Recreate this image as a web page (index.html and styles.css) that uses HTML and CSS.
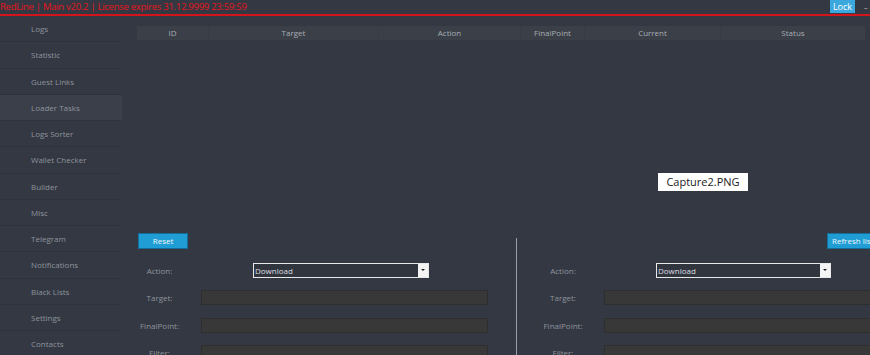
FILE: index.html
```html
<!DOCTYPE html>
<html>
<head>
<meta charset="utf-8">
<link rel="stylesheet" href="styles.css">
</head>
<body>
<div class="app">
  <div class="titlebar">
    <span class="title">RedLine | Main v20.2 | License expires 31.12.9999 23:59:59</span>
    <span class="lock">Lock</span>
    <span class="minimize">_</span>
  </div>
  <div class="main">
    <nav class="sidebar">
      <div class="nav-item">Logs</div>
      <div class="nav-item">Statistic</div>
      <div class="nav-item">Guest Links</div>
      <div class="nav-item active">Loader Tasks</div>
      <div class="nav-item">Logs Sorter</div>
      <div class="nav-item">Wallet Checker</div>
      <div class="nav-item">Builder</div>
      <div class="nav-item">Misc</div>
      <div class="nav-item">Telegram</div>
      <div class="nav-item">Notifications</div>
      <div class="nav-item">Black Lists</div>
      <div class="nav-item">Settings</div>
      <div class="nav-item">Contacts</div>
    </nav>
    <section class="content">
      <div class="table">
        <div class="thead">
          <div class="th c-id">ID</div>
          <div class="th c-target">Target</div>
          <div class="th c-action">Action</div>
          <div class="th c-final">FinalPoint</div>
          <div class="th c-current">Current</div>
          <div class="th c-status">Status</div>
        </div>
        <div class="tbody"></div>
        <div class="watermark">Capture2.PNG</div>
      </div>
      <div class="panels">
        <div class="panel left">
          <div class="btn-row"><span class="btn">Reset</span></div>
          <div class="form">
            <div class="row">
              <span class="label">Action:</span>
              <span class="select sel-left"><span class="sel-text">Download</span><span class="sel-arrow"></span></span>
            </div>
            <div class="row">
              <span class="label">Target:</span>
              <span class="input"></span>
            </div>
            <div class="row">
              <span class="label">FinalPoint:</span>
              <span class="input"></span>
            </div>
            <div class="row">
              <span class="label">Filter:</span>
              <span class="input"></span>
            </div>
          </div>
        </div>
        <div class="panel right">
          <div class="btn-row end"><span class="btn refresh">Refresh list</span></div>
          <div class="form">
            <div class="row">
              <span class="label">Action:</span>
              <span class="select sel-right"><span class="sel-text">Download</span><span class="sel-arrow"></span></span>
            </div>
            <div class="row">
              <span class="label">Target:</span>
              <span class="input"></span>
            </div>
            <div class="row">
              <span class="label">FinalPoint:</span>
              <span class="input"></span>
            </div>
            <div class="row">
              <span class="label">Filter:</span>
              <span class="input"></span>
            </div>
          </div>
        </div>
      </div>
    </section>
  </div>
</div>
</body>
</html>
```

FILE: styles.css
```css
* { box-sizing: border-box; }
html, body { margin: 0; padding: 0; }
body {
  width: 870px;
  height: 355px;
  overflow: hidden;
  background: #333842;
  font-family: "Open Sans", "Noto Sans", sans-serif;
  font-size: 8px;
  color: #9aa0a9;
}
.app { width: 870px; height: 355px; display: flex; flex-direction: column; overflow: hidden; }
.titlebar {
  height: 16px;
  flex: none;
  display: flex;
  align-items: flex-start;
  border-bottom: 2px solid #d3141b;
}
.title {
  color: #e3161d;
  font-size: 9.6px;
  line-height: 13px;
  letter-spacing: -0.32px;
  flex: 1;
  white-space: nowrap;
}
.lock {
  width: 25px;
  height: 13px;
  background: #3aa8dd;
  color: #fff;
  font-size: 9px;
  line-height: 13px;
  text-align: center;
  margin-right: 9px;
}
.minimize {
  color: #c8ccd2;
  font-size: 8px;
  line-height: 9px;
  width: 6px;
  overflow: hidden;
}
.main { flex: 1; display: flex; min-height: 0; }
.sidebar { width: 122px; flex: none; display: flex; flex-direction: column; }
.nav-item {
  height: 26.25px;
  flex: none;
  line-height: 26px;
  padding-left: 31px;
  border-bottom: 1px solid #2d323b;
  color: #8f949d;
  font-size: 8px;
  white-space: nowrap;
}
.nav-item.active { background: #3a3f49; }
.content { flex: 1; padding: 10px 0 0 15px; display: flex; flex-direction: column; min-width: 0; }
.table { width: 728px; height: 206px; display: flex; flex-direction: column; position: relative; flex: none; }
.thead { height: 14px; display: flex; background: #3a3f48; }
.th {
  text-align: center;
  line-height: 14px;
  color: #a9adb4;
  font-size: 8px;
  border-right: 1px solid #373c45;
}
.th:last-child { border-right: none; }
.c-id { width: 72px; }
.c-target { width: 170px; }
.c-action { width: 142px; }
.c-final { width: 64px; }
.c-current { width: 136px; }
.c-status { width: 144px; }
.tbody { flex: 1; }
.watermark {
  position: absolute;
  left: 521px;
  top: 147px;
  width: 90px;
  height: 18px;
  background: #fff;
  color: #1a1a1a;
  font-size: 11px;
  line-height: 18px;
  text-align: center;
}
.panels { flex: 1; display: flex; margin-top: 1px; min-height: 0; }
.panel { display: flex; flex-direction: column; }
.panel.left { width: 379px; padding-left: 1px; padding-right: 28px; }
.panel.right { flex: 1; border-left: 1px solid #9a9ea5; margin-top: 5px; }
.btn-row { height: 16px; display: flex; flex: none; }
.panel.right .btn-row { margin-top: -5px; }
.btn-row.end { justify-content: flex-end; }
.btn {
  height: 16px;
  width: 50px;
  background: #1f9dd4;
  border: 1px solid #136f9a;
  color: #f2f8fb;
  font-size: 8px;
  line-height: 14px;
  text-align: center;
}
.btn.refresh { width: 43px; text-align: left; padding-left: 4px; white-space: nowrap; overflow: hidden; border-right: none; }
.form { display: grid; grid-auto-rows: 27.3px; margin-top: 14px; }
.panel.left .form { grid-template-columns: 63px 1fr; }
.panel.right .form { grid-template-columns: 87px 1fr; }
.row { display: contents; }
.label {
  font-size: 8px;
  line-height: 15px;
  color: #8f949d;
  white-space: nowrap;
}
.panel.left .label { text-align: center; width: 43px; }
.panel.right .label { width: 92px; text-align: center; }
.input {
  height: 15px;
  background: #383838;
  border: 1px solid #2e2e2e;
}
.panel.right .input { margin-right: -2px; }
.select {
  height: 15px;
  border: 1px solid #e8e8e8;
  background: #31353d;
  display: flex;
  align-items: stretch;
}
.sel-left { width: 176px; margin-left: 52px; }
.sel-right { width: 175px; margin-left: 52px; }
.sel-text { flex: 1; color: #dcdee2; font-size: 8px; line-height: 13px; padding-left: 1px; }
.sel-arrow {
  width: 10px;
  background: #f4f4f4;
  position: relative;
}
.sel-arrow::after {
  content: "";
  position: absolute;
  left: 3px;
  top: 5px;
  border-left: 2px solid transparent;
  border-right: 2px solid transparent;
  border-top: 2px solid #222;
}
```
